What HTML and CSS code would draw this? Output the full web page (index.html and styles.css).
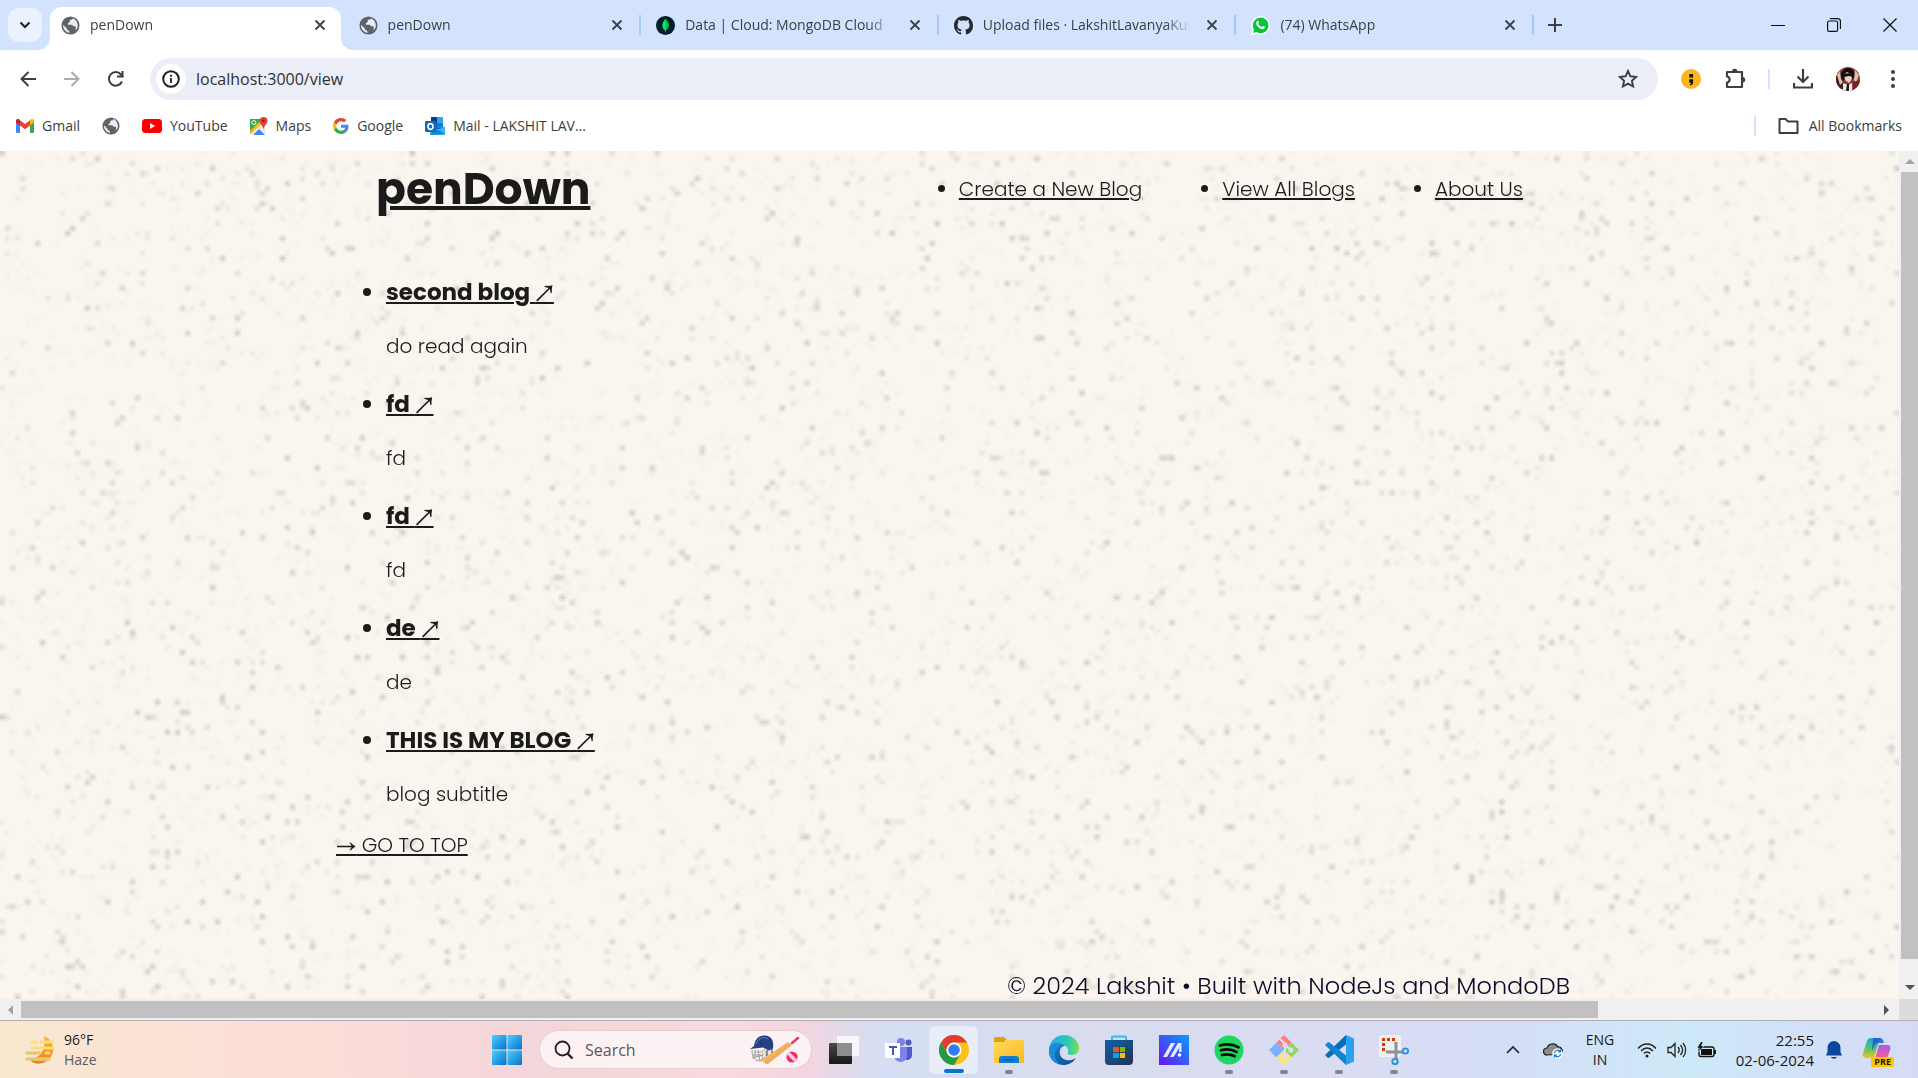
FILE: index.html
```html
<!DOCTYPE html>
<html lang="en">
<head>
<meta charset="utf-8">
<title>penDown</title>
<link rel="stylesheet" href="styles.css">
</head>
<body>
<svg class="defs" aria-hidden="true">
  <defs>
    <symbol id="globe" viewBox="0 0 20 20">
      <circle cx="10" cy="10" r="9.5" fill="#5f6368"/>
      <path fill="#e8eef8" d="M12.5 2.3c-.2 1.500-1.300 1.600-2.400 1.700-1 .1-1.100 1.200-.7 1.900l-1.200 1.200c-1 .3-1.200 1.200-.8 2h3.300c1.300 0 2 .8 2.100 1.700h1.500c1 0 1.400.7 1.300 1.500l-.4 2.700c1.500-1.200 2.500-3 2.500-5 0-3.500-2.100-6.500-5.200-7.700zM2.200 9.300C1.900 13.600 4.800 17 8.800 17.800v-1.600c0-.8-.7-1.200-1.500-1.300-.9-.1-1.100-.8-1-1.600L2.200 9.300z"/>
    </symbol>
    <symbol id="close" viewBox="0 0 12 12"><path d="M1.500 1.500l9 9M10.500 1.500l-9 9" stroke="currentColor" stroke-width="1.800" fill="none"/></symbol>
    <linearGradient id="moon" x2="0" y2="1"><stop stop-color="#fdb833"/><stop offset="1" stop-color="#f07b18"/></linearGradient>
    <linearGradient id="win" x2="1" y2="1"><stop stop-color="#4fd2fb"/><stop offset="1" stop-color="#0670cf"/></linearGradient>
    <linearGradient id="bat" x2="1" y2="1"><stop stop-color="#ffcf8a"/><stop offset="1" stop-color="#e58b35"/></linearGradient>
    <linearGradient id="folder" x2="1" y2="1"><stop stop-color="#ffd95c"/><stop offset="1" stop-color="#fcb91d"/></linearGradient>
    <linearGradient id="edgeTop" x2="1"><stop stop-color="#2aa9e8"/><stop offset=".6" stop-color="#2cc7c0"/><stop offset="1" stop-color="#74e34e"/></linearGradient>
    <linearGradient id="edgeLow" x2="1" y2="1"><stop stop-color="#1687d6"/><stop offset="1" stop-color="#10488f"/></linearGradient>
    <linearGradient id="store" x2="1" y2="1"><stop stop-color="#0e62a8"/><stop offset="1" stop-color="#263353"/></linearGradient>
    <linearGradient id="asus" x1="0" y1="1" x2="1" y2="0"><stop stop-color="#6a14f5"/><stop offset="1" stop-color="#0a9df8"/></linearGradient>
    <linearGradient id="pilotA" x2="0" y2="1"><stop stop-color="#16a6e8"/><stop offset=".55" stop-color="#5dc36a"/><stop offset="1" stop-color="#f5c518"/></linearGradient>
    <linearGradient id="pilotB" x2="0" y2="1"><stop stop-color="#a45cf0"/><stop offset=".6" stop-color="#ee5aa0"/><stop offset="1" stop-color="#f98a4c"/></linearGradient>
    <linearGradient id="dark" x2="0" y2="1"><stop stop-color="#4a4a4a"/><stop offset="1" stop-color="#171717"/></linearGradient>
  </defs>
</svg>

<div class="browser">
  <div class="tabstrip">
    <button class="tab-search" aria-label="Search tabs"><svg width="12" height="8" viewBox="0 0 12 8"><path d="M1.500 1.500L6 6l4.500-4.500" fill="none" stroke="#1f1f1f" stroke-width="2"/></svg></button>
    <div class="tabs">
      <div class="tab tab-active"><svg class="favicon"><use href="#globe"/></svg><span class="tab-title">penDown</span><button class="tab-close" aria-label="Close tab"><svg><use href="#close"/></svg></button></div>
      <div class="tab"><svg class="favicon"><use href="#globe"/></svg><span class="tab-title">penDown</span><button class="tab-close" aria-label="Close tab"><svg><use href="#close"/></svg></button></div>
      <div class="tab"><svg class="favicon" viewBox="0 0 20 20"><circle cx="10" cy="10" r="10" fill="#001e2b"/><path d="M10 3c.6 1.500 3.300 3.100 3.300 6.900 0 2.700-1.500 4.300-2.800 5.200L10.300 17h-.6l-.2-1.900c-1.300-.9-2.800-2.500-2.800-5.200C6.700 6.100 9.400 4.500 10 3z" fill="#00ed64"/><path d="M10 3c.6 1.500 3.300 3.100 3.300 6.900 0 2.700-1.500 4.300-2.800 5.200L10.300 17H10z" fill="#00b84f"/></svg><span class="tab-title">Data | Cloud: MongoDB Cloud</span><button class="tab-close" aria-label="Close tab"><svg><use href="#close"/></svg></button></div>
      <div class="tab"><svg class="favicon" viewBox="0 0 16 16"><path fill="#24292f" d="M8 0C3.580 0 0 3.580 0 8c0 3.540 2.290 6.530 5.470 7.590.4.070.55-.17.55-.38 0-.19-.01-.82-.01-1.490-2.010.37-2.530-.49-2.690-.94-.09-.23-.48-.94-.82-1.130-.28-.15-.68-.52-.01-.53.63-.01 1.080.58 1.230.82.720 1.210 1.870.87 2.330.66.070-.52.28-.87.51-1.070-1.780-.2-3.640-.89-3.640-3.950 0-.87.31-1.590.82-2.150-.08-.2-.36-1.020.08-2.120 0 0 .67-.21 2.200.82.640-.18 1.320-.27 2-.27s1.360.09 2 .27c1.530-1.040 2.200-.82 2.200-.82.440 1.100.16 1.920.08 2.120.51.560.82 1.270.82 2.150 0 3.070-1.870 3.750-3.650 3.950.29.250.54.730.54 1.480 0 1.070-.01 1.930-.01 2.200 0 .21.150.46.550.38A8.010 8.010 0 0 0 16 8c0-4.420-3.580-8-8-8z"/></svg><span class="tab-title">Upload files · LakshitLavanyaKumar</span><button class="tab-close" aria-label="Close tab"><svg><use href="#close"/></svg></button></div>
      <div class="tab"><svg class="favicon" viewBox="0 0 20 20"><path d="M1 19l1.300-4.700A9 9 0 1 1 5.700 17.700z" fill="#08c43c" stroke="#fff" stroke-width="1.500"/><path d="M6.500 5.500c.8-.8 1.500-.4 1.800.8.3 1-.8 1.300-.5 2 .7 1.500 1.800 2.500 3.200 3.100.8.300 1.100-1.100 1.900-.8 1.500.5 2 .9 1.600 1.800-.6 1.400-2.300 1.700-4 1.100-2.500-.9-4.300-2.700-5-5-.3-1.200.2-2.300 1-3z" fill="#fff"/></svg><span class="tab-title">(74) WhatsApp</span><button class="tab-close" aria-label="Close tab"><svg><use href="#close"/></svg></button></div>
    </div>
    <button class="new-tab" aria-label="New tab"><svg width="14" height="14" viewBox="0 0 14 14"><path d="M7 0v14M0 7h14" stroke="#3c4043" stroke-width="2"/></svg></button>
    <div class="window-buttons">
      <button aria-label="Minimize"><svg width="14" height="14" viewBox="0 0 14 14"><path d="M0 7.500h14" stroke="#111"/></svg></button>
      <button aria-label="Restore"><svg width="14" height="14" viewBox="0 0 14 14" fill="none" stroke="#111" stroke-width="1.200"><rect x=".6" y="3" width="10" height="10.400" rx="1.500"/><path d="M3 .6h7.500a3 3 0 0 1 3 3V11"/></svg></button>
      <button aria-label="Close"><svg width="14" height="14" viewBox="0 0 14 14"><path d="M.5.500l13 13M13.500.500l-13 13" stroke="#111" stroke-width="1.200"/></svg></button>
    </div>
  </div>

  <div class="toolbar">
    <div class="nav-buttons">
      <button aria-label="Back"><svg width="16" height="16" viewBox="0 0 16 16"><path d="M8.500 1L1.500 8l7 7M1.500 8H16" fill="none" stroke="#3c4043" stroke-width="2"/></svg></button>
      <button aria-label="Forward" disabled><svg width="16" height="16" viewBox="0 0 16 16"><path d="M7.500 1l7 7-7 7M14.500 8H0" fill="none" stroke="#a9acb0" stroke-width="2"/></svg></button>
      <button aria-label="Reload"><svg width="18" height="18" viewBox="0 0 18 18"><path d="M15 11.500A6.800 6.800 0 1 1 14 4.500l2 2.500" fill="none" stroke="#3c4043" stroke-width="2"/><path d="M16.500 1v6.500H10v-2h4.500V1z" fill="#3c4043"/></svg></button>
    </div>
    <div class="omnibox">
      <button class="site-info" aria-label="View site information"><svg width="18" height="18" viewBox="0 0 18 18"><circle cx="9" cy="9" r="7.800" fill="none" stroke="#1f1f1f" stroke-width="2"/><path d="M9 8v5M9 4.700v2" stroke="#1f1f1f" stroke-width="1.800"/></svg></button>
      <input class="address" aria-label="Address" value="localhost:3000/view">
      <button class="star" aria-label="Bookmark this tab"><svg width="20" height="20" viewBox="0 0 20 20"><path d="M10 2l2.400 5.300 5.700.6-4.200 3.900 1.200 5.700L10 14.600l-5.100 2.900 1.200-5.700L1.900 7.900l5.700-.6z" fill="none" stroke="#3c4043" stroke-width="1.900"/></svg></button>
    </div>
    <div class="actions">
      <button aria-label="Extension"><svg width="20" height="20" viewBox="0 0 20 20"><circle cx="10" cy="10" r="10" fill="#fdb61b"/><path d="M8.300 5h3.800v3.400H8.300zM8.300 10.200h3.800v3c0 1.800-1.200 2.800-3 3.200l-.4-1.300c.8-.2 1.300-.6 1.400-1.400H8.300z" fill="#111"/></svg></button>
      <button aria-label="Extensions"><svg width="22" height="22" viewBox="0 0 22 22"><path d="M2 4h15v15H2v-4.500c3.500-.5 3.500-5.500 0-6z" fill="none" stroke="#3c4043" stroke-width="2.200" stroke-linejoin="round"/><path d="M7 3.500a2.700 2.700 0 0 1 5.400 0zM17.500 9a2.700 2.700 0 0 1 0 5.400z" fill="#3c4043"/></svg></button>
      <span class="divider"></span>
      <button aria-label="Downloads"><svg width="20" height="20" viewBox="0 0 20 20"><path d="M10 0v12M4.500 7.500L10 13l5.500-5.500M1 14v4.500h18V14" fill="none" stroke="#3c4043" stroke-width="2.200"/></svg></button>
      <button aria-label="Profile"><svg width="24" height="24" viewBox="0 0 24 24"><clipPath id="av"><circle cx="12" cy="12" r="12"/></clipPath><g clip-path="url(#av)"><path d="M0 0h24v24H0z" fill="#84413d"/><path d="M0 9l6-4 3 14-5 5H0z" fill="#3b2220"/><path d="M5 10c0-6 3-9 7-9s7 3 7 8l-3 4H8z" fill="#120d10"/><path d="M8 8l3-3 4 2 1 5-3 4-4-3z" fill="#f0d2bd"/><path d="M8 7l6-1 3 4-4-1-5 1z" fill="#15100f"/><path d="M1 8l3-4 1 8 2 3-3 3zM19 3l4 5-3 8-2-3z" fill="#e3bfa8"/><path d="M7 16l5 2 4-2 1 8H7z" fill="#eee9e6"/><path d="M11 17l2 0 0 7h-3z" fill="#1c1718"/><path d="M17 15l7-2v11h-8z" fill="#7b1f2b"/></g></svg></button>
      <button aria-label="Menu"><svg width="6" height="20" viewBox="0 0 6 20" fill="#3c4043"><circle cx="3" cy="3" r="2"/><circle cx="3" cy="10" r="2"/><circle cx="3" cy="17" r="2"/></svg></button>
    </div>
  </div>

  <div class="bookmarks">
    <a class="bookmark" href="#gmail"><svg width="18" height="14" viewBox="0 0 18 14"><path d="M0 2v11a1 1 0 0 0 1 1h3V5z" fill="#4285f4"/><path d="M14 5v9h3a1 1 0 0 0 1-1V2z" fill="#34a853"/><path d="M14 1.200V6.500L18 3.500V2c0-2-2-2.500-3.300-1.500z" fill="#fbbc04"/><path d="M4 1.200l5 3.800 5-3.800v5.300L9 10.300 4 6.500z" fill="#ea4335"/><path d="M0 2v1.500l4 3V1.200L3.300.500C2-.5 0 0 0 2z" fill="#c5221f"/></svg>Gmail</a>
    <a class="bookmark" href="#site" aria-label="Site"><svg width="18" height="18"><use href="#globe"/></svg></a>
    <a class="bookmark" href="#youtube"><svg width="20" height="14" viewBox="0 0 20 14"><rect width="20" height="14" rx="3.500" fill="#f00"/><path d="M8 4l5 3-5 3z" fill="#fff"/></svg>YouTube</a>
    <a class="bookmark" href="#maps"><svg width="18" height="18" viewBox="0 0 18 18"><path d="M0 2h15v15H0z" fill="#34a853"/><path d="M0 15L11 5l4 4v8H0z" fill="#e8eaed"/><path d="M3 18l6-6 6 6z" fill="#4285f4"/><path d="M0 14l10-10 2 2L1 17H0z" fill="#fbbc04"/><circle cx="3.800" cy="5.500" r="2" fill="none" stroke="#fff"/><path d="M13.500 0a4 4 0 0 0-4 4c0 3 3 4 4 8 1-4 4-5 4-8a4 4 0 0 0-4-4z" fill="#ea4335"/><circle cx="13.500" cy="4" r="1.400" fill="#8c2018"/></svg>Maps</a>
    <a class="bookmark" href="#google"><svg width="16" height="16" viewBox="0 0 48 48"><path fill="#4285f4" d="M46.500 24.500c0-1.600-.1-3.100-.4-4.500H24v9h12.700c-.6 3-2.300 5.500-4.800 7.200l7.300 5.700c4.600-4.200 7.300-10.400 7.300-17.400z"/><path fill="#34a853" d="M24 48c6.500 0 11.900-2.100 15.900-5.800l-7.700-6c-2.200 1.500-4.900 2.300-8.200 2.300-6.300 0-11.600-4.200-13.500-9.900l-8 6.200C6.500 42.600 14.600 48 24 48z"/><path fill="#fbbc05" d="M10.500 28.600a14.500 14.500 0 0 1 0-9.200l-8-6.200a24 24 0 0 0 0 21.600z"/><path fill="#ea4335" d="M24 9.500c3.500 0 6.700 1.200 9.200 3.600l6.900-6.900C35.900 2.400 30.500 0 24 0 14.600 0 6.500 5.400 2.500 13.200l8 6.200C12.400 13.700 17.700 9.500 24 9.500z"/></svg>Google</a>
    <a class="bookmark" href="#mail"><svg width="20" height="18" viewBox="0 0 20 18"><path d="M6 0h12v12H6z" fill="#0a66c2"/><path d="M6 0h6v6H6z" fill="#0a3f86"/><path d="M12 0h6v6h-6z" fill="#28a8ea"/><path d="M12 6h6v5h-6z" fill="#1480d8"/><path d="M5 18V9l8 4 7-4v8a1 1 0 0 1-1 1z" fill="#35b5f1"/><path d="M5 18l15-1-9-6z" fill="#1684d8"/><rect y="4" width="11" height="11" rx="1" fill="#0f6cbd"/><ellipse cx="5.500" cy="9.500" rx="2.500" ry="2.900" fill="none" stroke="#fff" stroke-width="1.600"/></svg>Mail - LAKSHIT LAV...</a>
    <span class="divider divider-right"></span>
    <button class="all-bookmarks"><svg width="21" height="16" viewBox="0 0 21 16"><path d="M1.500 1h6l2.500 2.500h9.500V15h-18z" fill="none" stroke="#3c4043" stroke-width="2" stroke-linejoin="round"/></svg>All Bookmarks</button>
  </div>

  <div class="viewport">
    <div class="page" id="top">
      <canvas class="speckle" aria-hidden="true"></canvas>
      <div class="container">
        <header class="site-header">
          <h1><a href="#top">penDown</a></h1>
          <ul class="site-nav">
            <li><a href="#new">Create a New Blog</a></li>
            <li><a href="#view">View All Blogs</a></li>
            <li><a href="#about">About Us</a></li>
          </ul>
        </header>
        <ul class="posts">
          <li><h2><a href="#p1">second blog <span class="arrow">↗</span></a></h2><p>do read again</p></li>
          <li><h2><a href="#p2">fd <span class="arrow">↗</span></a></h2><p>fd</p></li>
          <li><h2><a href="#p3">fd <span class="arrow">↗</span></a></h2><p>fd</p></li>
          <li><h2><a href="#p4">de <span class="arrow">↗</span></a></h2><p>de</p></li>
          <li><h2><a href="#p5">THIS IS MY BLOG <span class="arrow">↗</span></a></h2><p>blog subtitle</p></li>
        </ul>
        <a class="to-top" href="#top"><span class="arrow">→</span> GO TO TOP</a>
      </div>
      <footer class="site-footer">© 2024 Lakshit • Built with NodeJs and MondoDB</footer>
    </div>
    <div class="scroll-y"><span class="tri tri-up"></span><span class="thumb"></span><span class="tri tri-down"></span></div>
    <div class="scroll-x"><span class="tri tri-left"></span><span class="track"><span class="thumb"></span></span><span class="tri tri-right"></span></div>
    <div class="scroll-corner"></div>
  </div>
</div>

<div class="taskbar">
  <button class="weather"><svg width="30" height="30" viewBox="0 0 30 30"><path d="M19 1c9 3 12 14 6 22-6 7-17 8-22 0 8 2 19-4 16-22z" fill="url(#moon)"/><path d="M7 7h4M16 7h12M7 13h21M2 18h13M21 18h3M2 24h22" stroke="#fadf78" stroke-width="3" stroke-linecap="round"/><path d="M2 18h13M2 24h22" stroke="#e5c577" stroke-width="3" stroke-linecap="round"/></svg><span class="weather-text"><span>96°F</span><span class="muted">Haze</span></span></button>
  <div class="apps">
    <button class="app" aria-label="Start"><svg width="30" height="30" viewBox="0 0 30 30" fill="url(#win)"><rect width="14.500" height="14.500" rx="1"/><rect x="15.500" width="14.500" height="14.500" rx="1"/><rect y="15.500" width="14.500" height="14.500" rx="1"/><rect x="15.500" y="15.500" width="14.500" height="14.500" rx="1"/></svg></button>
    <div class="search">
      <svg width="20" height="20" viewBox="0 0 20 20"><circle cx="8.500" cy="8.500" r="7" fill="none" stroke="#222" stroke-width="1.800"/><path d="M13.500 13.500l5 5" stroke="#222" stroke-width="2.400"/></svg>
      <input type="search" aria-label="Search" placeholder="Search">
      <svg width="50" height="30" viewBox="0 0 50 30"><path d="M2 15c0 8 3 11 9 11M4 17h9M3 20h8M5 15v8M8 15l2 11M13 15l-1 10M2 23l11-3M14 14c3 5 2 9-3 12" fill="none" stroke="#9a9a9a"/><path d="M10 15h12v7l-5 4z" fill="#f4d8ce" opacity=".7"/><path d="M0 14l4-3C5 4 9 0 15 0.500c7 .5 9 6 8 13l-4 2-6-3z" fill="#26417f"/><path d="M6 9c2-6 8-8 12-5" fill="none" stroke="#4c6aad" stroke-width="1.500"/><path d="M11 7v4" stroke="#14285a"/><path d="M22 14v8M17 15v6" stroke="#555" stroke-width="1.200"/><path d="M13 24L38 7l4 3-24 19c-2 1-7-3-5-5z" fill="url(#bat)"/><path d="M42 8l6-5" stroke="#e63b57" stroke-width="2.400" stroke-linecap="round"/><circle cx="42" cy="22" r="5.600" fill="#ee3159"/><path d="M38 18l8 8" stroke="#efc9f7" stroke-width="3.500"/></svg>
    </div>
    <button class="app" aria-label="Task view"><svg width="30" height="28" viewBox="0 0 30 28"><rect y="7" width="23" height="21" rx="1" fill="url(#dark)"/><rect x="8" width="22" height="20" fill="#fff" opacity=".75"/><path d="M8 7h15v13H8z" fill="#8e8e8e"/></svg></button>
    <button class="app" aria-label="Teams"><svg width="28" height="26" viewBox="0 0 28 26"><circle cx="16" cy="5" r="4" fill="#7b83eb"/><circle cx="23.500" cy="5.500" r="3" fill="#5059c9"/><path d="M18 10h9v8a5 5 0 0 1-8 4z" fill="#5059c9"/><path d="M10 10h12v9a6.500 6.500 0 0 1-12 3z" fill="#7b83eb"/><rect y="6" width="15" height="15" fill="#fff"/><path d="M4 9h8v2H9v7H7v-7H4z" fill="#4b53bc"/></svg></button>
    <button class="app app-current" aria-label="Chrome"><svg width="30" height="30" viewBox="0 0 30 30"><circle cx="15" cy="15" r="15" fill="#fbc116"/><path d="M2 7.500a15 15 0 0 1 26 0H15a7.500 7.500 0 0 0-6.500 11.200z" fill="#e33b2e"/><path d="M2 7.500l6.500 11.200A7.500 7.500 0 0 0 21.500 18.700L15 30A15 15 0 0 1 2 7.500z" fill="#229a49"/><circle cx="15" cy="15" r="7.500" fill="#fff"/><circle cx="15" cy="15" r="5.800" fill="#2f7df0"/></svg></button>
    <button class="app app-open" aria-label="File Explorer"><svg width="30" height="26" viewBox="0 0 30 26"><path d="M0 2a2 2 0 0 1 2-2h8l3 3h-2v4H0z" fill="#dfa00c"/><path d="M0 5h10l3-2h15a2 2 0 0 1 2 2v21H0z" fill="url(#folder)"/><path d="M5 26v-4a3 3 0 0 1 3-3h14a3 3 0 0 1 3 3v4z" fill="#0f7ed0"/><path d="M9 23h12" stroke="#0a5190"/></svg></button>
    <button class="app" aria-label="Edge"><svg width="30" height="30" viewBox="0 0 30 30"><path d="M0 14C1 5 8 0 15 0c9 0 15 6 15 13 0 5-4 7-8 7-3 0-4-1-3-3 1-3-1-6-5-7-6-1-12 0-14 4z" fill="url(#edgeTop)"/><path d="M0 14c2-7 12-7 16-3-4 0-6 4-5 8 1 5 8 9 16 4-4 6-9 7-13 7C5 29-1 22 0 14z" fill="url(#edgeLow)"/><path d="M0 14c2-5 8-7 14-4-5 1-9 6-8 12 1 3 3 6 6 8C4 28-1 22 0 14z" fill="#1c8bdb"/></svg></button>
    <button class="app" aria-label="Microsoft Store"><svg width="30" height="30" viewBox="0 0 30 30"><path d="M8 6V2.500A1 1 0 0 1 9 1.500h12a1 1 0 0 1 1 1V6" fill="none" stroke="#2dbbf3" stroke-width="2"/><path d="M1 5h28v21a4 4 0 0 1-4 4H5a4 4 0 0 1-4-4z" fill="url(#store)"/><path d="M9 12h6v5H9z" fill="#f25022"/><path d="M16 12h5v5h-5z" fill="#7fba00"/><path d="M9 18h6v5H9z" fill="#00a4ef"/><path d="M16 18h5v5h-5z" fill="#ffb900"/></svg></button>
    <button class="app" aria-label="MyASUS"><svg width="30" height="30" viewBox="0 0 30 30"><path d="M0 0h30v30H0z" fill="url(#asus)"/><path d="M4 22L12 8h4L8 22zM11 22l8-14h3.500v9H20v-4L14.500 22z" fill="#e5ebff"/><circle cx="20.500" cy="20" r="1.800" fill="#fff"/></svg></button>
    <button class="app app-open" aria-label="Spotify"><svg width="30" height="30" viewBox="0 0 30 30"><circle cx="15" cy="15" r="14.500" fill="#1ed760"/><path d="M6 10.500c6-1.800 13-1.200 18.500 1.800M7 15.300c5-1.400 11-.9 15.500 1.700M8 20c4-1.100 9-.7 12.700 1.300" fill="none" stroke="#0b0b0b" stroke-width="2.700" stroke-linecap="round"/></svg></button>
    <button class="app app-open" aria-label="Git Bash"><svg width="30" height="30" viewBox="0 0 30 30"><path d="M15 0l7.500 7.500L15 15 7.500 7.500z" fill="#ff7f7c"/><path d="M7.500 7.500L15 15l-7.500 7.500L0 15z" fill="#7fb0ff"/><path d="M22.500 7.500L30 15l-7.500 7.500L15 15z" fill="#8ed65f"/><path d="M15 15l7.500 7.500L15 30l-7.500-7.500z" fill="#ffe27c"/><path d="M11 4l5 5v13M16 10l6 5" stroke="#dcdff3" stroke-width="2" fill="none"/><circle cx="16" cy="10" r="2.500" fill="#dcdff3"/><circle cx="16" cy="21" r="2.500" fill="#dcdff3"/><circle cx="22" cy="15" r="2.500" fill="#dcdff3"/></svg></button>
    <button class="app app-open" aria-label="Visual Studio Code"><svg width="30" height="30" viewBox="0 0 30 30"><path d="M22 0L2 19c-.8.7-.8 1.500 0 2.200L3.500 22.500c.6.500 1.300.5 2 0L22 9.500z" fill="#0c6fb3"/><path d="M22 30L2 11c-.8-.7-.8-1.500 0-2.200l1.500-1.300c.6-.5 1.300-.5 2 0L22 20.500z" fill="#0f85d1"/><path d="M22 0l8 3.500v23L22 30z" fill="#2ba2ee"/></svg></button>
    <button class="app app-open" aria-label="Snipping Tool"><svg width="30" height="30" viewBox="0 0 30 30"><rect width="22" height="22" rx="2" fill="#f1f1f1"/><path d="M4.500 16V4.500H17" fill="none" stroke="#d83b01" stroke-width="3" stroke-dasharray="3 2"/><path d="M17 7v17M7 17h17" stroke="#8b9298" stroke-width="3"/><circle cx="26.500" cy="16" r="2.700" fill="none" stroke="#2091dc" stroke-width="1.800"/><circle cx="16" cy="26.500" r="2.700" fill="none" stroke="#2091dc" stroke-width="1.800"/></svg></button>
  </div>
  <div class="tray">
    <button aria-label="Show hidden icons"><svg width="14" height="9" viewBox="0 0 14 9"><path d="M1 8l6-6 6 6" fill="none" stroke="#222" stroke-width="1.600"/></svg></button>
    <button aria-label="OneDrive"><svg width="20" height="18" viewBox="0 0 20 18"><path d="M4 14a3.500 3.500 0 0 1 0-7 6 6 0 0 1 11-1 4 4 0 0 1 3 7z" fill="#8c8c8c" stroke="#222" stroke-width="1.200"/><circle cx="14.500" cy="12.500" r="5.300" fill="#fff"/><path d="M11.500 12a3 3 0 0 1 5.500-1.500M17.500 13a3 3 0 0 1-5.500 1.500M17.500 8.500v2.300h-2.300M11.500 16.500v-2.300h2.300" fill="none" stroke="#1670c8" stroke-width="1.200"/></svg></button>
    <button class="lang"><span>ENG</span><span>IN</span></button>
    <button class="status" aria-label="Network, volume and battery">
      <svg width="20" height="16" viewBox="0 0 20 16" fill="none" stroke="#222" stroke-width="1.500"><path d="M1 6.500c5-6 13-6 18 0M4 9c4-4 8-4 12 0M6.800 11.500c2.200-2 4.200-2 6.400 0"/><circle cx="10" cy="14" r="1.500" fill="#222" stroke="none"/></svg>
      <svg width="20" height="16" viewBox="0 0 20 16" fill="none" stroke="#222" stroke-width="1.300"><path d="M1 5.500h3L8 1.500v13l-4-4H1zM11 5c1.500 1.800 1.500 4.200 0 6M13.500 3c2.500 3 2.500 7 0 10M16 1c3.500 4 3.500 10 0 14"/></svg>
      <svg width="20" height="16" viewBox="0 0 20 16"><rect x="2" y="5" width="15" height="9.500" rx="2" fill="none" stroke="#111" stroke-width="1.400"/><path d="M4 7h11v6H4z" fill="#111"/><path d="M18 8v4" stroke="#111" stroke-width="2"/><path d="M4-.5L0 6h2.500L1.500 10 7 4H4.500L6-.5z" fill="#111" stroke="#d0e6f8" stroke-width=".6"/></svg>
    </button>
    <button class="clock"><span>22:55</span><span>02-06-2024</span></button>
    <button aria-label="Notifications"><svg width="18" height="20" viewBox="0 0 18 20"><path d="M9 1a6.500 6.500 0 0 1 6.500 6.500V12L17 15.500H1L2.500 12V7.500A6.500 6.500 0 0 1 9 1zM6 17h6c-.5 2.300-5.500 2.300-6 0z" fill="#0b479c"/></svg></button>
    <button class="copilot" aria-label="Copilot"><svg width="30" height="26" viewBox="0 0 30 26"><path d="M9 1h9l-6 20H4c-3 0-4-3-3-5L5 4c.7-2 2-3 4-3z" fill="url(#pilotA)"/><path d="M11 1h7c2 0 3 1 4 5h-6c-3 0-4 4-6 8z" fill="#1a55cf" opacity=".8"/><path d="M17 8h8c3 0 4 2 3 5l-3 9c-.7 2-2 3-4 3h-9z" fill="url(#pilotB)"/></svg><span class="badge">PRE</span></button>
  </div>
</div>
<script src="speckle.js"></script>
</body>
</html>
```
FILE: styles.css
```css
* { box-sizing: border-box; }

body {
  margin: 0;
  height: 100vh;
  display: flex;
  flex-direction: column;
  overflow: hidden;
  font: 14px/20px "Segoe UI", "Open Sans", "Noto Sans", sans-serif;
  color: #3c4043;
}

button {
  display: flex;
  align-items: center;
  justify-content: center;
  padding: 0;
  border: 0;
  background: none;
  font: inherit;
  color: inherit;
}

input { font: inherit; }

svg { flex: none; }

.defs { position: absolute; width: 0; height: 0; }

.browser {
  flex: 1;
  min-height: 0;
  display: flex;
  flex-direction: column;
  background: #fff;
}

/* Tabs */
.tabstrip {
  display: flex;
  height: 50px;
  padding-left: 8px;
  background: #d3e2fd;
}

.tab-search {
  width: 34px;
  height: 34px;
  margin: 8px 4px 0 0;
  border-radius: 11px;
  background: #ebf1fe;
}

.tabs {
  flex: 0 1 1488px;
  min-width: 0;
  display: flex;
}

.tab {
  flex: 1;
  min-width: 0;
  display: flex;
  align-items: center;
  gap: 10px;
  padding: 0 12px 0 15px;
  position: relative;
}

.tab + .tab::after,
.tab:last-child::after {
  content: "";
  position: absolute;
  right: 0;
  top: 15px;
  width: 2px;
  height: 20px;
  background: #a8c7fa;
}

.tab-active {
  margin: 7px 3px 0 4px;
  padding: 0 9px 7px 11px;
  border-radius: 12px 12px 0 0;
  background: #fff;
}

.tab-active::before,
.tab-active::after {
  content: "";
  position: absolute;
  bottom: 0;
  width: 12px;
  height: 12px;
}

.tab-active::before {
  left: -12px;
  background: radial-gradient(circle at 0 0, #d3e2fd 12px, #fff 12px);
}

.tab-active::after {
  right: -12px;
  background: radial-gradient(circle at 100% 0, #d3e2fd 12px, #fff 12px);
}

.favicon { width: 19px; height: 19px; }

.tab-title {
  flex: 1;
  overflow: hidden;
  white-space: nowrap;
  -webkit-mask-image: linear-gradient(to right, #000 88%, transparent);
  mask-image: linear-gradient(to right, #000 88%, transparent);
}

.tab-close { width: 24px; height: 24px; }
.tab-close svg { width: 12px; height: 12px; }

.new-tab { width: 42px; }

.window-buttons {
  display: flex;
  margin-left: auto;
}

.window-buttons button { width: 56px; }

/* Toolbar */
.toolbar {
  display: flex;
  align-items: center;
  height: 58px;
  padding: 0 3px 0 6px;
  background: #fff;
}

.nav-buttons { display: flex; }

.nav-buttons button {
  width: 44px;
  height: 40px;
}

.omnibox {
  flex: 1;
  display: flex;
  align-items: center;
  height: 42px;
  margin-left: 12px;
  padding: 0 16px 0 6px;
  border-radius: 21px;
  background: #ebeef7;
}

.site-info {
  width: 30px;
  height: 30px;
  border-radius: 50%;
  background: #fff;
}

.address {
  flex: 1;
  margin-left: 8px;
  padding: 0 2px;
  border: 0;
  outline: 0;
  background: none;
  font-size: 16px;
  color: #303030;
}

.star { width: 28px; height: 28px; }

.actions {
  display: flex;
  align-items: center;
  padding-left: 10px;
}

.actions button {
  width: 45px;
  height: 40px;
}

.divider {
  width: 2px;
  height: 20px;
  margin: 0 10px;
  background: #d3e2fd;
}

/* Bookmarks */
.bookmarks {
  display: flex;
  align-items: center;
  gap: 22px;
  height: 43px;
  padding: 0 16px 7px;
  font-size: 14px;
}

.bookmark {
  display: flex;
  align-items: center;
  gap: 8px;
  color: inherit;
  text-decoration: none;
}

.divider-right { margin: 0 0 0 auto; }

.all-bookmarks { gap: 10px; }

/* Page */
.viewport {
  flex: 1;
  min-height: 0;
  display: grid;
  grid-template: 1fr 21px / 1fr 19px;
}

.page {
  position: relative;
  overflow: hidden;
  display: flex;
  flex-direction: column;
  background: #faf5ef;
  font-family: Poppins, Inter, sans-serif;
  font-size: 20px;
  line-height: 30px;
  font-weight: 300;
  color: #1b1b1b;
}

.speckle {
  position: absolute;
  inset: 0;
  width: 100%;
  height: 100%;
}

.page a {
  color: inherit;
  text-decoration-thickness: 2px;
  text-underline-offset: 2px;
}

.container {
  position: relative;
  width: 100%;
  max-width: 1227px;
  margin: 0 auto;
}

.site-header {
  display: flex;
  align-items: center;
  justify-content: space-between;
  height: 76px;
  padding: 0 40px;
}

.site-header h1 {
  margin: 0;
  font-size: 44px;
  line-height: 60px;
  font-weight: 700;
}

.site-header h1 a { text-decoration-thickness: 4px; }

.site-nav {
  display: flex;
  gap: 80px;
  margin: 0;
  padding: 0;
}

.posts {
  margin: 47px 0 0;
  padding: 0 0 0 50px;
}

.posts li { height: 112px; }

.posts li::marker { font-size: 24px; }

.posts h2 {
  margin: 0 0 21px;
  font-size: 23px;
  line-height: 36px;
  font-weight: 700;
}

.posts p { margin: 0; }

.arrow {
  font-family: "Noto Sans Math", "DejaVu Sans", sans-serif;
  font-weight: 300;
  font-size: 20px;
  line-height: 20px;
}

.posts .arrow { font-size: 24px; }

.to-top {
  display: block;
  width: max-content;
  margin-top: -4px;
}

.site-footer {
  position: relative;
  width: 100%;
  max-width: 1241px;
  margin: 108px auto 0;
  font-size: 24px;
  line-height: 36px;
  text-align: right;
  white-space: nowrap;
  color: #0a0a2a;
}

/* Scroll bars */
.scroll-y {
  display: flex;
  flex-direction: column;
  align-items: center;
  padding: 8px 0 9px 2px;
  background: #f0f0f0;
}

.scroll-y .thumb {
  flex: 1;
  align-self: stretch;
  margin: 8px 0 26px;
  background: #c1c1c1;
}

.scroll-x {
  display: flex;
  align-items: center;
  padding: 0 10px 0 8px;
  background: #f0f0f0;
}

.scroll-x .track {
  flex: 1;
  height: 17px;
  margin: 0 8px;
}

.scroll-x .thumb {
  display: block;
  width: 85%;
  height: 17px;
  background: #c1c1c1;
}

.scroll-corner { background: #dcdcdc; }

.tri { border: 5px solid transparent; }
.tri-up { border-top: 0; border-bottom-color: #a3a3a3; }
.tri-down { border-bottom: 0; border-top-color: #505050; }
.tri-left { border-left: 0; border-right-color: #a3a3a3; }
.tri-right { border-right: 0; border-left-color: #505050; }

/* Taskbar */
.taskbar {
  display: grid;
  grid-template-columns: 1fr auto 1fr;
  align-items: center;
  height: 58px;
  padding-right: 18px;
  border-top: 1px solid #b3adb5;
  background: linear-gradient(to right, #f9e8cf 0, #fbe1d5 10%, #fbdcd8 18%, #f4d6db 27%, #f2d8d6 31%, #fad9df 38%, #f2d5e0 42%, #d5def4 46%, #d8dcee 55%, #dadcf2 70%, #d5ddf6 78%, #cde9f8 88%, #d1e1f7 94%, #d6dbf3 100%);
  color: #1b1b1b;
}

.weather {
  justify-self: start;
  gap: 9px;
  padding-left: 25px;
  text-align: left;
}

.weather-text span,
.lang span,
.clock span { display: block; }

.muted { color: #5c5c5c; }

.apps {
  display: flex;
  align-items: center;
}

.app {
  position: relative;
  width: 55px;
  height: 48px;
}

.app-current {
  width: 49px;
  margin: 0 3px;
  border: 1px solid #e6e9f4;
  border-radius: 5px;
  background: #e9edf8;
}

.app-open::after,
.app-current::after {
  content: "";
  position: absolute;
  bottom: 0;
  left: calc(50% - 4px);
  width: 8px;
  height: 4px;
  border-radius: 2px;
  background: #808490;
}

.app-current::after {
  left: calc(50% - 10px);
  width: 20px;
  background: #0078d4;
}

.search {
  display: flex;
  align-items: center;
  width: 273px;
  height: 39px;
  margin: 0 4px 0 5px;
  padding: 0 11px 0 14px;
  border: 1px solid #e6cdd0;
  border-radius: 20px;
  background: #fcf2f3;
}

.search input {
  flex: 1;
  min-width: 0;
  margin-left: 9px;
  border: 0;
  outline: 0;
  background: none;
  font-size: 16px;
}

.search input::placeholder { color: #5c5658; }

.tray {
  display: flex;
  align-items: center;
  justify-content: flex-end;
}

.tray > button { min-width: 40px; }

.lang,
.clock { flex-direction: column; }

.tray .lang { width: 54px; }

.status {
  gap: 10px;
  padding: 0 8px 0 10px;
}

.clock {
  align-items: flex-end;
  width: 89px;
  font-size: 15px;
}

.copilot {
  position: relative;
  width: 46px;
  height: 34px;
}

.badge {
  position: absolute;
  right: 6px;
  bottom: 0;
  padding: 0 3px;
  border-radius: 2px;
  background: #fdc600;
  font-size: 9px;
  line-height: 10px;
  font-weight: 700;
}
```
FILE: speckle.js
```js
// Paints the paper texture: faint grey flecks on a coarse grid, scaled up smoothly.
(function () {
  var canvas = document.querySelector(".speckle");
  var cell = 5;
  var cols = Math.ceil(canvas.clientWidth / cell);
  var rows = Math.ceil(canvas.clientHeight / cell);
  canvas.width = cols;
  canvas.height = rows;
  var ctx = canvas.getContext("2d");
  var seed = 7;
  function random() {
    seed = (seed * 16807) % 2147483647;
    return seed / 2147483647;
  }
  for (var y = 0; y < rows; y++) {
    for (var x = 0; x < cols; x++) {
      if (random() < 0.09) {
        var alpha = 0.03 + Math.pow(random(), 3) * 0.26;
        ctx.fillStyle = "rgba(100, 102, 98, " + alpha + ")";
        ctx.fillRect(x, y, 1, 1);
      }
    }
  }
})();
```
